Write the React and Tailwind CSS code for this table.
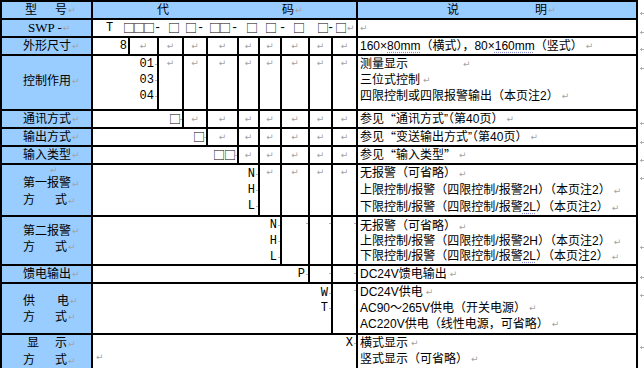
import React from "react";

const cjk = "font-['Liberation_Sans','Noto_Sans_CJK_SC',sans-serif] text-[12px] text-black";
const mono = "font-['Liberation_Mono',monospace] text-[12px] text-black";
const blue = "bg-[#99ccff]";

const Ret = ({ className = "" }) => (
  <span className={`font-['DejaVu_Sans',sans-serif] text-[9px] leading-[10px] text-[#a3a3a3] ${className}`}>↵</span>
);

const Tick = () => <span className="ml-[1px] inline-block h-[1px] w-[2px] bg-[#b4b4b4]" />;

const Box = () => (
  <span className="inline-block w-[10px] font-['Noto_Sans_CJK_SC',sans-serif] text-[12px] leading-[12px] tracking-[-2px]">□</span>
);

const Dash = ({ className = "" }) => <span className={`inline-block w-[6px] text-center ${className}`}>-</span>;

const Dotted = ({ children }) => (
  <span className="underline decoration-dotted decoration-[#8c8cd0] underline-offset-2">{children}</span>
);

const Q = ({ children }) => <span className="font-['Noto_Sans_CJK_SC',sans-serif]">{children}</span>;

// blue label column on the left
const Side = ({ lines, className = "justify-center leading-[16px]" }) => (
  <div className={`${blue} flex flex-col pl-[21px] ${cjk} ${className}`}>
    {lines.map((l, i) => (
      <div key={i} className="flex items-center whitespace-nowrap">
        {l}
        <Ret className="ml-[1px]" />
      </div>
    ))}
  </div>
);

// merged code cell, text sits against the right edge
const Code = ({ span, lines, className = "justify-center leading-[16px]" }) => (
  <div className={`${span} flex flex-col items-end bg-white ${mono} ${className}`}>
    {lines.map((l, i) => (
      <div key={i} className="flex items-center">
        {l}
        <Tick />
      </div>
    ))}
  </div>
);

const Arr = ({ className = "items-center" }) => (
  <div className={`flex justify-center bg-white ${className}`}>
    <Ret />
  </div>
);

const Mark = ({ className }) => (
  <div className={`flex items-start justify-end bg-white ${className}`}>
    <Tick />
  </div>
);

const Desc = ({ lines, className = "justify-center leading-[16px]" }) => (
  <div className={`flex flex-col bg-white pl-[2px] ${cjk} ${className}`}>
    {lines.map((l, i) => (
      <div key={i} className="flex items-center whitespace-nowrap">
        {l}
        <Ret className="ml-[3px]" />
      </div>
    ))}
  </div>
);

const Fang = ({ a, b }) => (
  <>
    {a}
    <span className="inline-block w-[20px]" />
    {b}
  </>
);

// the small grey end-of-row sign that the window cuts
const EndMark = ({ className }) => (
  <div className={`flex items-start ${className}`}>
    <span className="mt-[1px] inline-block h-[1px] w-[4px] bg-[#b0b0b0]" />
    <span className="-ml-[3px] inline-block h-[3px] w-[1px] bg-[#b0b0b0]" />
  </div>
);

const alarm = [
  "无报警（可省略）",
  <>上限控制/报警（四限控制/报警2H）（本页注2）</>,
  <>下限控制/报警（四限控制/报警<Dotted>2L</Dotted>）（本页注2）</>,
];

const App = () => {
  return (
    <div className="flex h-[368px] w-[644px] items-start overflow-hidden bg-white">
      <div className="grid shrink-0 grid-cols-[89px_35px_27px_23px_22px_29px_19px_20px_26px_21px_23px_278px] grid-rows-[16px_16px_16px_53px_16px_16px_16px_50px_47px_16px_49px_40px] gap-[2px] bg-black p-[2px]">
        {/* header */}
        <div className={`${blue} flex items-center pl-[23px] ${cjk}`}>
          型<span className="ml-[18px]">号</span>
          <Ret className="ml-[1px]" />
        </div>
        <div className={`${blue} col-span-10 flex items-center pl-[64px] ${cjk}`}>
          代<span className="ml-[113px]">码</span>
          <Ret className="ml-[1px]" />
        </div>
        <div className={`${blue} flex items-center pl-[89px] ${cjk}`}>
          说<span className="ml-[76px]">明</span>
          <Ret className="ml-[1px]" />
        </div>

        {/* SWP */}
        <div className={`${blue} flex items-center pl-[26px]`}>
          <span className="font-['Liberation_Serif',serif] text-[13px] text-black">SWP -</span>
          <Ret className="ml-[1px]" />
        </div>
        <div className={`col-span-10 flex items-center bg-white ${mono}`}>
          <span className="ml-[13px] inline-block w-[7px]">T</span>
          <span className="ml-[10px] flex">
            <Box />
            <Box />
            <Box />
          </span>
          <Dash className="ml-[1px]" />
          <span className="ml-[8px] flex"><Box /></span>
          <span className="ml-[7px] flex"><Box /></span>
          <Dash className="ml-[2px]" />
          <span className="ml-[6px] flex">
            <Box />
            <Box />
          </span>
          <Dash className="ml-[2px]" />
          <span className="ml-[9px] flex"><Box /></span>
          <span className="ml-[9px] flex"><Box /></span>
          <Dash className="ml-[4px]" />
          <span className="ml-[8px] flex"><Box /></span>
          <span className="ml-[14px] flex"><Box /></span>
          <Dash />
          <span className="ml-[2px] flex"><Box /></span>
          <Ret className="ml-[2px]" />
        </div>
        <div className="flex items-center bg-white pl-[2px]">
          <Ret />
        </div>

        {/* 外形尺寸 */}
        <Side lines={["外形尺寸"]} />
        <div className={`flex items-center justify-end bg-white pr-[1px] ${mono}`}>8</div>
        <Arr />
        <Arr />
        <Arr />
        <Arr />
        <Arr />
        <Arr />
        <Arr />
        <Arr />
        <Arr />
        <Desc lines={[<>160×<Dotted>80mm</Dotted>（横式），80×<Dotted>160mm</Dotted>（竖式）</>]} />

        {/* 控制作用 */}
        <Side lines={["控制作用"]} className="justify-center pb-[4px] leading-[16px]" />
        <Code span="col-span-2" lines={["01", "03", "04"]} className="leading-[16px]" />
        <Arr className="items-start pt-[2px]" />
        <Arr className="items-start pt-[2px]" />
        <Arr className="items-start pt-[2px]" />
        <Arr className="items-start pt-[2px]" />
        <Arr className="items-start pt-[2px]" />
        <Arr className="items-start pt-[2px]" />
        <Arr className="items-start pt-[2px]" />
        <Arr className="items-start pt-[2px]" />
        <div className={`flex flex-col bg-white pl-[2px] leading-[16px] ${cjk}`}>
          <div className="flex items-center whitespace-nowrap">
            测量显示
            <Ret className="ml-[55px]" />
          </div>
          <div className="flex items-center whitespace-nowrap">
            三位式控制
            <Ret className="ml-[3px]" />
          </div>
          <div className="flex items-center whitespace-nowrap">
            四限控制或四限报警输出（本页注2）
            <Ret className="ml-[3px]" />
          </div>
        </div>

        {/* 通讯方式 */}
        <Side lines={["通讯方式"]} />
        <Code span="col-span-3" lines={[<Box />]} />
        <Arr />
        <Arr />
        <Arr />
        <Arr />
        <Arr />
        <Arr />
        <Arr />
        <Desc lines={[<>参见<Q>“</Q>通讯方式”（第40页）</>]} />

        {/* 输出方式 */}
        <Side lines={["输出方式"]} />
        <Code span="col-span-4" lines={[<Box />]} />
        <Arr />
        <Arr />
        <Arr />
        <Arr />
        <Arr />
        <Arr />
        <Desc lines={[<>参见<Q>“</Q>变送输出方式”（第40页）</>]} />

        {/* 输入类型 */}
        <Side lines={["输入类型"]} />
        <Code
          span="col-span-5"
          lines={[
            <>
              <Box />
              <span className="ml-[1px] flex"><Box /></span>
            </>,
          ]}
        />
        <Arr />
        <Arr />
        <Arr />
        <Arr />
        <Arr />
        <Desc lines={[<>参见<Q>“</Q>输入类型<Q>”</Q></>]} />

        {/* 第一报警方式 */}
        <div className={`${blue} flex flex-col pl-[21px] leading-[17px] ${cjk}`}>
          <div className="flex items-center pl-[27px]">
            <Ret />
          </div>
          <div className="flex items-center whitespace-nowrap">
            第一报警
            <Ret className="ml-[1px]" />
          </div>
          <div className="flex items-center whitespace-nowrap">
            <Fang a="方" b="式" />
            <Ret className="ml-[1px]" />
          </div>
        </div>
        <Code span="col-span-6" lines={["N", "H", "L"]} className="pt-[1px] leading-[16px]" />
        <Arr className="items-start pt-[2px]" />
        <Arr className="items-start pt-[2px]" />
        <Arr className="items-start pt-[2px]" />
        <Arr className="items-start pt-[2px]" />
        <Desc lines={alarm} className="leading-[17px]" />

        {/* 第二报警方式 */}
        <Side lines={["第二报警", <Fang a="方" b="式" />]} className="justify-center pb-[3px] leading-[16px]" />
        <Code span="col-span-7" lines={["N", "H", "L"]} className="leading-[16px]" />
        <Mark className="pt-[6px]" />
        <Mark className="pt-[6px]" />
        <Mark className="pt-[6px]" />
        <Desc lines={alarm} className="pt-[2px] leading-[15px]" />

        {/* 馈电输出 */}
        <Side lines={["馈电输出"]} />
        <Code span="col-span-8" lines={["P"]} />
        <Mark className="pt-[7px]" />
        <Mark className="pt-[7px]" />
        <Desc lines={["DC24V馈电输出"]} />

        {/* 供电方式 */}
        <Side
          lines={[
            <>
              供<span className="inline-block w-[22px]" />电
            </>,
            <Fang a="方" b="式" />,
          ]}
        />
        <Code span="col-span-9" lines={["W", "T"]} className="pt-[2px] leading-[15px]" />
        <Mark className="pt-[6px]" />
        <Desc
          lines={["DC24V供电", "AC90～265V供电（开关电源）", "AC220V供电（线性电源，可省略）"]}
          className="leading-[16px]"
        />

        {/* 显示方式 */}
        <Side
          lines={[
            <>
              <span className="ml-[4px]">显</span>
              <span className="inline-block w-[16px]" />示
            </>,
            <Fang a="方" b="式" />,
          ]}
          className="leading-[17px]"
        />
        <div className={`col-span-10 flex flex-col bg-white leading-[17px] ${mono}`}>
          <div className="flex items-center justify-end">
            X<Tick />
          </div>
          <div className="flex items-center pl-[3px]">
            <Ret />
          </div>
        </div>
        <Desc lines={["横式显示", "竖式显示（可省略）"]} className="leading-[16px]" />
      </div>

      {/* row-end marks past the table edge */}
      <div className="flex flex-col pl-[2px]">
        <EndMark className="h-[18px] pt-[12px]" />
        <EndMark className="h-[18px] pt-[13px]" />
        <EndMark className="h-[18px] pt-[12px]" />
        <EndMark className="h-[55px] pt-[13px]" />
        <EndMark className="h-[18px] pt-[13px]" />
        <EndMark className="h-[18px] pt-[14px]" />
        <EndMark className="h-[18px] pt-[14px]" />
        <EndMark className="h-[52px] pt-[14px]" />
        <EndMark className="h-[49px] pt-[31px]" />
        <EndMark className="h-[18px] pt-[12px]" />
        <EndMark className="h-[51px] pt-[12px]" />
        <EndMark className="h-[40px] pt-[13px]" />
      </div>
    </div>
  );
};

export default App;
